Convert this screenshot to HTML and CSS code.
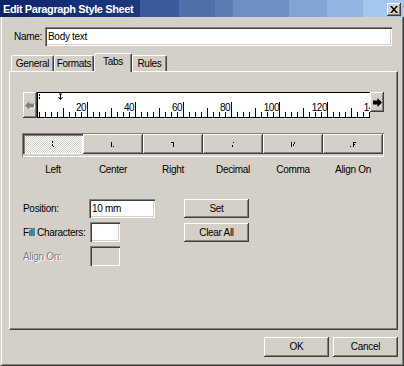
FILE: index.html
```html
<!DOCTYPE html>
<html lang="en">
<head>
    <meta charset="UTF-8">
    <title>Edit Paragraph Style Sheet</title>
    <link rel="stylesheet" href="styles.css">
</head>
<body>
    <div class="dialog">
        <div class="titlebar">
            <span class="title">Edit Paragraph Style Sheet</span>
            <div class="close-btn">
                <svg width="8" height="7" viewBox="0 0 8 7"><path d="M0 0h2l2 2.5L6 0h2L5 3.5 8 7H6L4 4.5 2 7H0l3-3.5z" fill="#000"/></svg>
            </div>
        </div>

        <div class="main">
            <!-- Name -->
            <div class="name-row">
                <label class="name-label">Name:</label>
                <div class="field name-field">Body text</div>
            </div>

            <!-- Tabs -->
            <div class="tabs">
                <div class="tab tab-general">General</div>
                <div class="tab tab-formats">Formats</div>
                <div class="tab tab-tabs active">Tabs</div>
                <div class="tab tab-rules">Rules</div>
            </div>

            <div class="panel">
                <!-- Ruler -->
                <div class="ruler-row">
                    <div class="scroll-btn scroll-left">
                        <svg width="10" height="9" viewBox="0 0 10 9">
                            <path d="M1 5.5 5.5 1v2.5H10v4H5.5V10z" fill="#fff"/>
                            <path d="M0 4.5 4.5 0v2.5H9v4H4.5V9z" fill="#808080"/>
                        </svg>
                    </div>
                    <svg class="ruler" width="333" height="26" viewBox="0 0 333 26" id="ruler">
                        <rect x="0" y="0" width="333" height="26" fill="#fff"/>
                        <rect x="0" y="0" width="333" height="1" fill="#000"/>
                        <rect x="0" y="25" width="333" height="1" fill="#000"/>
                        <rect x="0" y="0" width="1" height="26" fill="#000"/>
                        <rect x="2" y="2" width="1" height="2" fill="#000"/>
                        <rect x="2" y="5" width="1" height="2" fill="#000"/>
                        <path d="M23.5 2v5M21.5 5l2 2.5 2-2.5M22 2h3" stroke="#000" stroke-width="1" fill="none"/>
                        <g id="ticks" fill="#000"></g>
                        <g class="ruler-nums" font-family="Liberation Sans, Arial, sans-serif" font-size="10" text-anchor="end">
                            <text x="49" y="19">20</text>
                            <text x="97" y="19">40</text>
                            <text x="145" y="19">60</text>
                            <text x="193" y="19">80</text>
                            <text x="242" y="19">100</text>
                            <text x="290" y="19">120</text>
                            <text x="342" y="19">140</text>
                        </g>
                    </svg>
                    <div class="scroll-btn scroll-right">
                        <svg width="10" height="9" viewBox="0 0 10 9">
                            <path d="M10 4.5 5.5 0v2.5H1v4h4.5V9z" fill="#000"/>
                        </svg>
                    </div>
                </div>

                <!-- Tab alignment types -->
                <div class="tab-types">
                    <div class="type-btn pressed">
                        <svg width="6" height="7" viewBox="0 0 6 7"><path d="M2 0h1v2H2zM2 3h1v2H2zM3 5h1v1H3z" fill="#000"/></svg>
                    </div>
                    <div class="type-btn">
                        <svg width="6" height="7" viewBox="0 0 6 7"><path d="M1 1h1v5H1zM3 5h1v1H3z" fill="#000"/></svg>
                    </div>
                    <div class="type-btn">
                        <svg width="6" height="7" viewBox="0 0 6 7"><path d="M1 1h3v1H1zM3 2h1v4H3z" fill="#000"/></svg>
                    </div>
                    <div class="type-btn">
                        <svg width="6" height="7" viewBox="0 0 6 7"><path d="M3 1h1v1H3zM2 4h1v2H2z" fill="#000"/></svg>
                    </div>
                    <div class="type-btn">
                        <svg width="6" height="7" viewBox="0 0 6 7"><path d="M1 1h1v5H1zM4 1h1v2H4zM3 3h1v2H3z" fill="#000"/></svg>
                    </div>
                    <div class="type-btn">
                        <svg width="6" height="7" viewBox="0 0 6 7"><path d="M0 5h1v1H0zM3 1h3v1H3zM3 2h1v4H3zM4 3h1v1H4z" fill="#000"/></svg>
                    </div>
                </div>
                <div class="type-labels">
                    <span>Left</span>
                    <span>Center</span>
                    <span>Right</span>
                    <span>Decimal</span>
                    <span>Comma</span>
                    <span>Align On</span>
                </div>

                <!-- Tab settings -->
                <div class="tab-form">
                    <label class="form-label">Position:</label>
                    <div class="field pos-field">10 mm</div>
                    <div class="btn">Set</div>

                    <label class="form-label">Fill Characters:</label>
                    <div class="field small-field"></div>
                    <div class="btn">Clear All</div>

                    <label class="form-label disabled">Align On:</label>
                    <div class="field small-field disabled"></div>
                </div>
            </div>

            <div class="footer">
                <div class="btn footer-btn">OK</div>
                <div class="btn footer-btn">Cancel</div>
            </div>
        </div>
    </div>

    <script>
        // ruler ticks every 6px, taller on the half and full marks
        var ticks = document.getElementById('ticks');
        var html = '';
        for (var i = 0; i * 6 + 2 < 333; i++) {
            var x = i * 6 + 2;
            var h = 5;
            if (i % 8 === 0 && i > 0) h = 15;
            else if (i % 4 === 0 && i > 0) h = 9;
            html += '<rect x="' + x + '" y="' + (25 - h) + '" width="1" height="' + h + '"/>';
        }
        ticks.innerHTML = html;
    </script>
</body>
</html>
```

FILE: styles.css
```css
:root {
    --face: #d4d0c8;
    --shadow: #808080;
    --dark: #404040;
    --light: #fff;
}

* {
    box-sizing: border-box;
    margin: 0;
    padding: 0;
}

html, body {
    width: 404px;
    height: 366px;
    overflow: hidden;
}

body {
    background: var(--face);
    font-family: "Liberation Sans", Arial, sans-serif;
    font-size: 10px;
    letter-spacing: -0.3px;
    color: #000;
}

.dialog {
    display: flex;
    flex-direction: column;
    height: 366px;
}

.titlebar {
    height: 17px;
    flex-shrink: 0;
    display: flex;
    align-items: center;
    justify-content: space-between;
    padding: 0 3px 0 3px;
    background: linear-gradient(to right,
        #0a246a 0, #1d3a80 140px,
        #3b5a9b 140px, #3b5a9b 179px,
        #5070ab 179px, #5070ab 215px,
        #5c7db4 215px, #5c7db4 233px,
        #6d8fc3 233px, #6d8fc3 289px,
        #81a4d4 289px, #81a4d4 327px,
        #93b5e1 327px, #93b5e1 363px,
        #a4c7ee 363px);
}

.title {
    color: #fff;
    font-weight: bold;
    font-size: 11px;
    letter-spacing: -0.4px;
}

.close-btn {
    width: 14px;
    height: 13px;
    margin-top: 1px;
    display: flex;
    align-items: center;
    justify-content: center;
    background: var(--face);
    box-shadow: inset -1px -1px var(--dark), inset 1px 1px var(--light), inset -2px -2px var(--shadow);
}

.main {
    flex: 1;
    display: flex;
    flex-direction: column;
    padding: 10px 5px 0 8px;
    border-left: 1px solid var(--face);
    border-right: 1px solid var(--dark);
    border-bottom: 1px solid var(--dark);
    box-shadow: inset 1px 0 var(--light), inset -1px -1px var(--shadow);
}

.field {
    height: 19px;
    line-height: 19px;
    padding: 0 3px;
    background: #fff;
    box-shadow: inset 1px 1px var(--shadow), inset 2px 2px var(--dark), inset -1px -1px var(--light), inset -2px -2px var(--face);
}

.field.disabled {
    background: var(--face);
}

.name-row {
    display: flex;
    align-items: center;
    padding-left: 5px;
}

.name-label {
    width: 31px;
}

.name-field {
    width: 347px;
}

/* tab strip */
.tabs {
    display: flex;
    align-items: flex-end;
    height: 19px;
    margin-top: 7px;
    margin-bottom: -1px;
    padding-left: 2px;
    position: relative;
    z-index: 1;
}

.tab {
    height: 16px;
    margin-bottom: 1px;
    line-height: 15px;
    text-align: center;
    border-top: 1px solid var(--light);
    border-left: 1px solid var(--light);
    border-right: 1px solid var(--dark);
    border-radius: 2px 2px 0 0;
    box-shadow: inset -1px 0 var(--shadow);
}

.tab-general { width: 43px; }
.tab-formats { width: 40px; }
.tab-tabs { width: 38px; }
.tab-rules { width: 35px; }

.tab.active {
    height: 19px;
    margin-bottom: 0;
    line-height: 16px;
    background: var(--face);
}

.panel {
    height: 259px;
    padding: 20px 0 0 13px;
    border-top: 1px solid var(--light);
    border-left: 1px solid var(--light);
    border-right: 1px solid var(--dark);
    border-bottom: 1px solid var(--dark);
    box-shadow: inset -1px -1px var(--shadow);
}

/* ruler */
.ruler-row {
    display: flex;
    align-items: flex-start;
    height: 26px;
}

.scroll-btn {
    width: 14px;
    display: flex;
    align-items: center;
    justify-content: center;
    background: var(--face);
    box-shadow: inset -1px -1px var(--dark), inset 1px 1px var(--light), inset -2px -2px var(--shadow);
}

.scroll-left {
    height: 26px;
}

.scroll-right {
    height: 20px;
}

.ruler {
    display: block;
}

.ruler-nums {
    letter-spacing: -0.5px;
}

/* alignment buttons */
.tab-types {
    display: grid;
    grid-template-columns: repeat(6, 1fr);
    width: 362px;
    height: 24px;
    margin: 15px 0 0 -1px;
    padding: 1px;
    box-shadow: inset 1px 1px var(--shadow), inset -1px -1px var(--light);
}

.type-btn {
    height: 20px;
    display: flex;
    align-items: center;
    justify-content: center;
    background: var(--face);
    box-shadow: inset -1px -1px var(--dark), inset 1px 1px var(--light), inset -2px -2px var(--shadow);
}

.type-btn.pressed {
    background-color: #fff;
    background-image: conic-gradient(var(--face) 25%, #fff 0 50%, var(--face) 0 75%, #fff 0);
    background-size: 2px 2px;
    box-shadow: inset 1px 1px var(--dark), inset 2px 2px var(--shadow), inset -1px -1px var(--light);
}

.type-labels {
    display: grid;
    grid-template-columns: repeat(6, 1fr);
    width: 362px;
    margin: 7px 0 0 -1px;
    padding: 0 1px;
    line-height: 12px;
    text-align: center;
}

/* position / fill / align on */
.tab-form {
    display: grid;
    grid-template-columns: 66px 95px 65px;
    grid-auto-rows: 20px;
    row-gap: 4px;
    align-items: center;
    margin-top: 22px;
}

.form-label.disabled {
    color: var(--shadow);
    text-shadow: 1px 1px var(--light);
}

.pos-field {
    width: 66px;
}

.small-field {
    width: 30px;
    height: 20px;
    margin-left: 1px;
}

.btn {
    height: 19px;
    line-height: 19px;
    text-align: center;
    background: var(--face);
    box-shadow: inset -1px -1px var(--dark), inset 1px 1px var(--light), inset -2px -2px var(--shadow);
}

.footer {
    display: flex;
    justify-content: flex-end;
    gap: 4px;
    margin-top: 7px;
}

.footer-btn {
    width: 65px;
    height: 20px;
    line-height: 20px;
}
```
